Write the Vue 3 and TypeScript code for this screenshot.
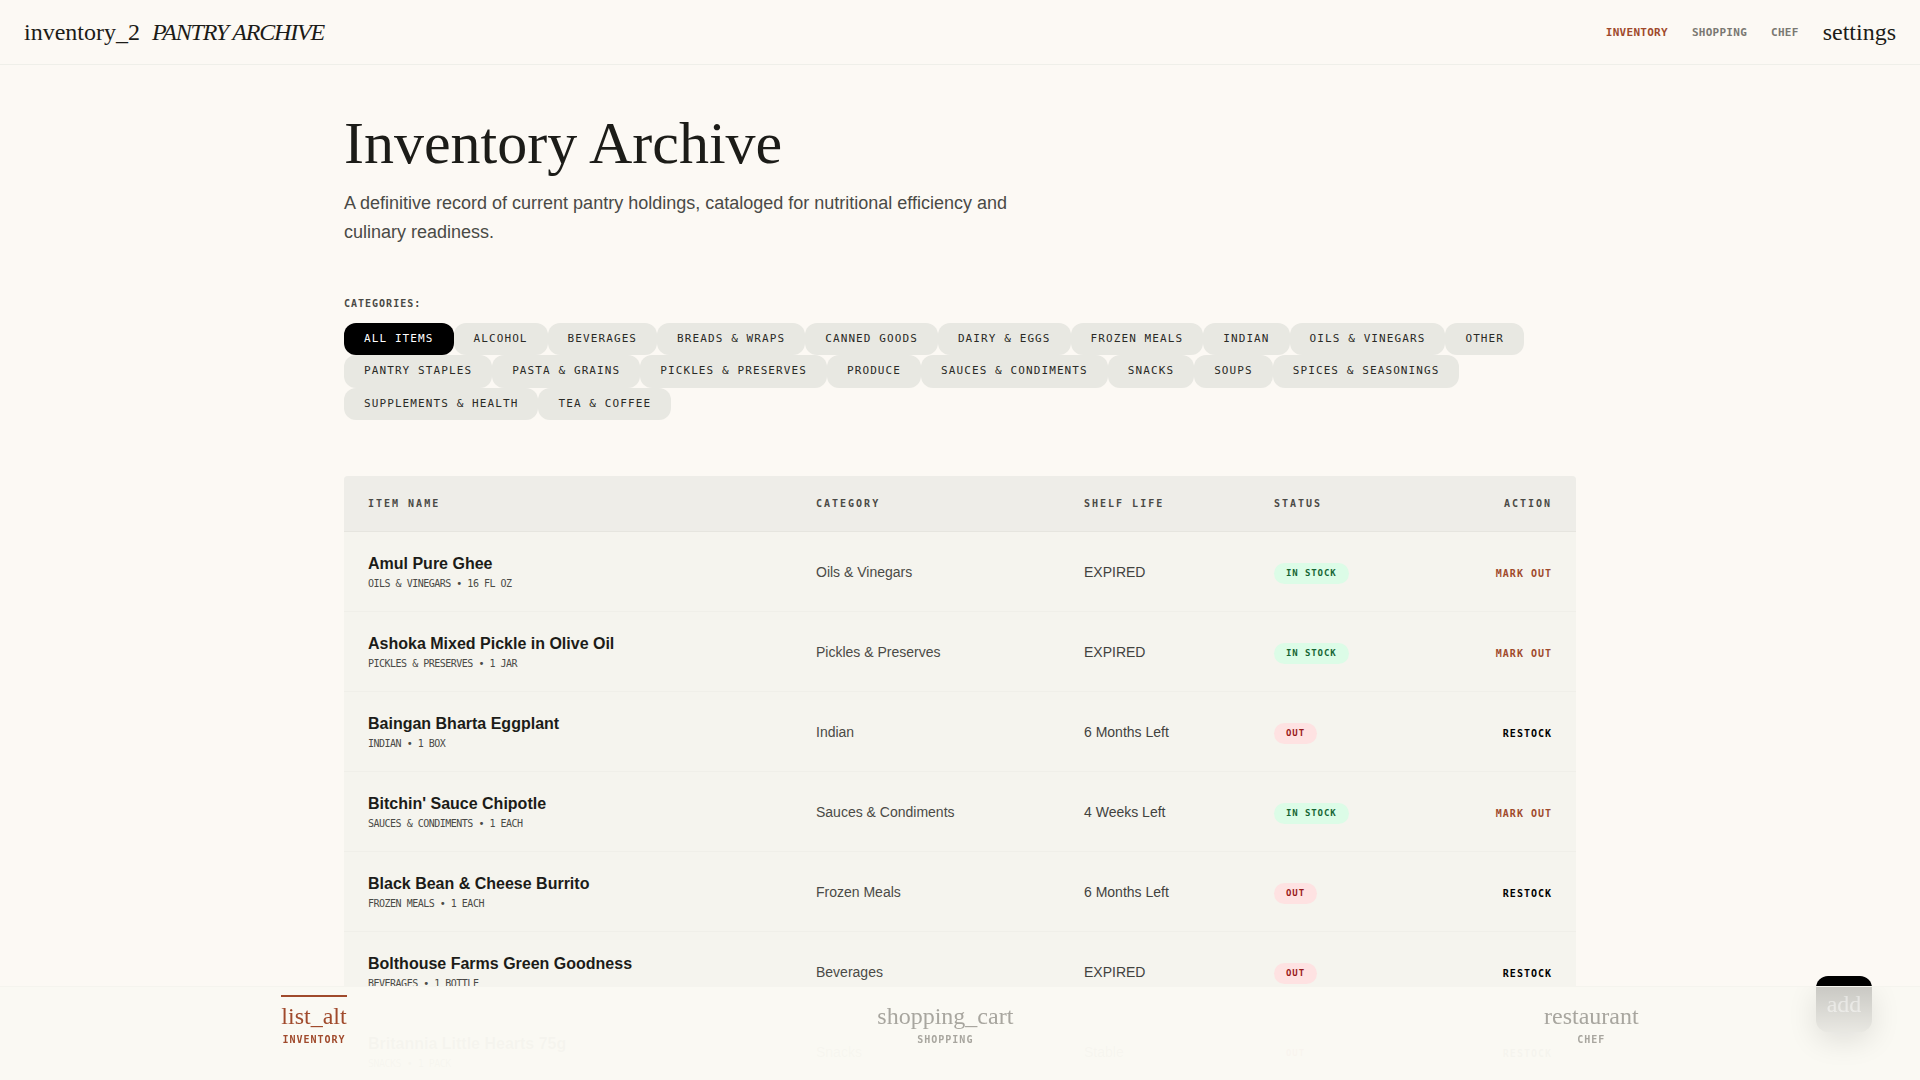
<script setup lang="ts">
interface Item { name: string; cat: string; size: string; life: string; inStock: boolean }
const cats: string[] = ['All Items','Alcohol','Beverages','Breads & Wraps','Canned Goods','Dairy & Eggs','Frozen Meals','Indian','Oils & Vinegars','Other','Pantry Staples','Pasta & Grains','Pickles & Preserves','Produce','Sauces & Condiments','Snacks','Soups','Spices & Seasonings','Supplements & Health','Tea & Coffee']
const items: Item[] = [
  { name: 'Amul Pure Ghee', cat: 'Oils & Vinegars', size: '16 FL OZ', life: 'EXPIRED', inStock: true },
  { name: 'Ashoka Mixed Pickle in Olive Oil', cat: 'Pickles & Preserves', size: '1 JAR', life: 'EXPIRED', inStock: true },
  { name: 'Baingan Bharta Eggplant', cat: 'Indian', size: '1 BOX', life: '6 Months Left', inStock: false },
  { name: "Bitchin' Sauce Chipotle", cat: 'Sauces & Condiments', size: '1 EACH', life: '4 Weeks Left', inStock: true },
  { name: 'Black Bean & Cheese Burrito', cat: 'Frozen Meals', size: '1 EACH', life: '6 Months Left', inStock: false },
  { name: 'Bolthouse Farms Green Goodness', cat: 'Beverages', size: '1 BOTTLE', life: 'EXPIRED', inStock: false },
  { name: 'Britannia Little Hearts 75g', cat: 'Snacks', size: '1 PACK', life: 'Stable', inStock: false }
]
const tabs = [
  { icon: 'list_alt', label: 'Inventory', active: true },
  { icon: 'shopping_cart', label: 'Shopping', active: false },
  { icon: 'restaurant', label: 'Chef', active: false }
]
</script>

<template>
  <div class="page">
    <header class="topbar">
      <div class="brand">
        <span class="sym">inventory_2</span>
        <span class="brand-name">PANTRY ARCHIVE</span>
      </div>
      <div class="topnav">
        <a class="toplink on">INVENTORY</a>
        <a class="toplink">SHOPPING</a>
        <a class="toplink">CHEF</a>
        <span class="sym">settings</span>
      </div>
    </header>

    <main class="main">
      <h1 class="title">Inventory Archive</h1>
      <p class="lead">A definitive record of current pantry holdings, cataloged for nutritional efficiency and culinary readiness.</p>

      <div class="cat-label">CATEGORIES:</div>
      <div class="pills">
        <button v-for="(c, i) in cats" :key="c" class="pill" :class="{ sel: i === 0 }">{{ c }}</button>
      </div>

      <section class="table">
        <div class="row head">
          <div>ITEM NAME</div>
          <div>CATEGORY</div>
          <div>SHELF LIFE</div>
          <div>STATUS</div>
          <div class="right">ACTION</div>
        </div>
        <div v-for="it in items" :key="it.name" class="row body">
          <div>
            <div class="name">{{ it.name }}</div>
            <div class="meta">{{ it.cat.toUpperCase() }} • {{ it.size }}</div>
          </div>
          <div class="cell">{{ it.cat }}</div>
          <div class="cell dark">{{ it.life }}</div>
          <div class="status"><span class="badge" :class="it.inStock ? 'ok' : 'out'">{{ it.inStock ? 'IN STOCK' : 'OUT' }}</span></div>
          <div class="right"><a class="action" :class="{ mark: it.inStock }">{{ it.inStock ? 'MARK OUT' : 'RESTOCK' }}</a></div>
        </div>
      </section>
    </main>

    <button class="fab"><span class="sym">add</span></button>

    <nav class="bottom">
      <a v-for="t in tabs" :key="t.icon" class="tab" :class="{ active: t.active }">
        <span class="sym">{{ t.icon }}</span>
        <span class="tab-label">{{ t.label.toUpperCase() }}</span>
      </a>
      <div class="fab-ghost"><span class="sym">add</span></div>
    </nav>
  </div>
</template>

<style>
html, body { margin: 0; background: #fcf9f4; }
</style>

<style scoped>
.page { min-height: 1080px; background: #fcf9f4; color: #1c1c18; font-family: "Liberation Sans", Arial, sans-serif; -webkit-font-smoothing: antialiased; }
.sym { font-family: "Liberation Serif", "Times New Roman", serif; font-size: 24px; line-height: 1; color: inherit; }
.topbar { height: 65px; box-sizing: border-box; padding: 0 24px; display: flex; align-items: center; justify-content: space-between; border-bottom: 1px solid #efefe9; }
.brand { display: flex; align-items: center; gap: 12px; }
.brand-name { font-family: "Liberation Serif", serif; font-style: italic; font-size: 24px; letter-spacing: -1.2px; line-height: 32px; }
.topnav { display: flex; align-items: center; gap: 24px; }
.toplink { font-family: "DejaVu Sans Mono", monospace; font-weight: 700; font-size: 11px; letter-spacing: 0.275px; color: #7a7872; }
.toplink.on { color: #a04a2c; }
.main { max-width: 1232px; margin: 0 auto; padding: 48px 0 96px; }
.title { margin: 0; font-family: "Liberation Serif", serif; font-weight: 400; font-size: 60px; line-height: 60px; color: #1c1c18; }
.lead { margin: 16px 0 0; max-width: 672px; font-size: 18px; line-height: 28.8px; color: #4a4a46; }
.cat-label { margin-top: 49.4px; font-family: "DejaVu Sans Mono", monospace; font-weight: 700; font-size: 10px; line-height: 15px; letter-spacing: 1px; color: #4a4a46; }
.pills { margin-top: 12px; display: flex; flex-wrap: wrap; }
.pill { border: 0; margin: 0; padding: 8px 20px; border-radius: 12px; background: #e8e8e2; color: #2a2a26; font-family: "DejaVu Sans Mono", monospace; font-size: 11px; line-height: 16.5px; letter-spacing: 1.1px; text-transform: uppercase; }
.pill.sel { background: #000; color: #fff; }
.table { margin-top: 56px; border-radius: 4px 4px 0 0; overflow: hidden; background: #f5f4ee; }
.row { display: grid; grid-template-columns: 448px 268px 190px 1fr 180px; align-items: center; padding: 0; }
.row > div { padding: 0 24px; }
.head { height: 56px; box-sizing: border-box; background: #eeede8; border-bottom: 1px solid #e6e5df; font-family: "DejaVu Sans Mono", monospace; font-weight: 700; font-size: 10px; letter-spacing: 2px; color: #4a4a46; }
.body { height: 80px; box-sizing: border-box; border-bottom: 1px solid #f0efe9; }
.right { text-align: right; }
.name { font-size: 16px; font-weight: 700; line-height: 24px; color: #1c1c18; }
.meta { font-family: "DejaVu Sans Mono", monospace; font-size: 10px; line-height: 15px; letter-spacing: -0.5px; color: #4a4a46; }
.cell { font-size: 14px; line-height: 20px; color: #4a4a46; }
.cell.dark { color: #42423e; }
.status { padding-top: 2px !important; }
.badge { display: inline-block; padding: 3px 12px; border-radius: 12px; font-family: "DejaVu Sans Mono", monospace; font-weight: 700; font-size: 9px; line-height: 15px; letter-spacing: 0.9px; }
.badge.ok { background: #dcfce7; color: #166534; }
.badge.out { background: #fee2e2; color: #991b1b; }
.action { font-family: "DejaVu Sans Mono", monospace; font-weight: 700; font-size: 10px; letter-spacing: 1px; color: #000; }
.action.mark { color: #a04a2c; }
.fab { position: fixed; right: 48px; bottom: 48px; width: 56px; height: 56px; border: 0; border-radius: 12px; background: #000; color: #fff; padding: 0; z-index: 5; }
.bottom { position: fixed; left: 0; right: 0; bottom: 0; height: 94px; box-sizing: border-box; padding: 8px 16px 0; display: flex; justify-content: space-around; align-items: flex-start; background: rgba(250,249,243,.98); border-top: 1px solid #f5f4ee; z-index: 10; overflow: hidden; }
.fab-ghost { position: absolute; right: 48px; top: -1px; width: 56px; height: 46px; border-radius: 0 0 12px 12px; background: linear-gradient(rgba(0,0,0,.18), rgba(0,0,0,.05)); box-shadow: 0 8px 30px rgba(0,0,0,.11); color: rgba(255,255,255,.42); display: flex; justify-content: center; padding-top: 6px; box-sizing: border-box; }
.tab { display: flex; flex-direction: column; align-items: center; color: #a8a69f; border-top: 2px solid transparent; padding-top: 7px; }
.tab.active { color: #a04a2c; border-top-color: #a04a2c; }
.tab-label { font-family: "DejaVu Sans Mono", monospace; font-weight: 700; font-size: 10px; line-height: 15px; letter-spacing: 1px; margin-top: 4px; }
</style>
